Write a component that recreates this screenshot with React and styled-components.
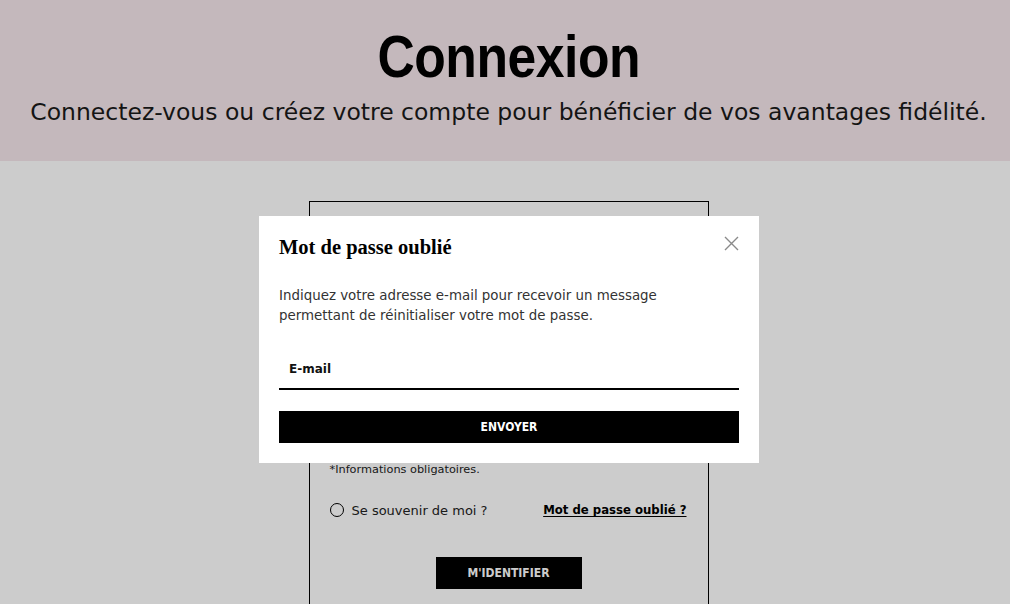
import React from "react";
import styled, { createGlobalStyle } from "styled-components";

const sans = `"DejaVu Sans", "Liberation Sans", sans-serif`;
const narrow = `"Liberation Sans Narrow", "DejaVu Sans Condensed", sans-serif`;

const GlobalStyle = createGlobalStyle`
  * { box-sizing: border-box; }
  html, body { margin: 0; padding: 0; background: #fff; }
  body { font-family: ${sans}; color: #000; overflow: hidden; }
`;

function App() {
  return (
    <>
      <GlobalStyle />
      <Page>
        <Hero>
          <Title>Connexion</Title>
          <Subtitle>
            Connectez-vous ou créez votre compte pour bénéficier de vos avantages fidélité.
          </Subtitle>
        </Hero>
        <Main>
          <Card>
            <FieldInput type="email" aria-label="E-mail" />
            <FieldInput type="password" aria-label="Mot de passe" />
            <Note>*Informations obligatoires.</Note>
            <OptionsRow>
              <Remember>
                <Radio />
                Se souvenir de moi ?
              </Remember>
              <ForgotLink href="#">Mot de passe oublié ?</ForgotLink>
            </OptionsRow>
            <LoginButton>M'IDENTIFIER</LoginButton>
          </Card>
        </Main>
      </Page>
      <Overlay />
      <Modal>
        <CloseButton aria-label="Fermer">
          <svg width="15" height="15" viewBox="0 0 15 15">
            <path d="M1 1L14 14M14 1L1 14" stroke="#8a8a8a" strokeWidth="1.4" fill="none" />
          </svg>
        </CloseButton>
        <ModalTitle>Mot de passe oublié</ModalTitle>
        <ModalText>
          Indiquez votre adresse e-mail pour recevoir un message
          <br />
          permettant de réinitialiser votre mot de passe.
        </ModalText>
        <EmailInput placeholder="E-mail" />
        <SendButton>ENVOYER</SendButton>
      </Modal>
    </>
  );
}
export default App;

const Page = styled.div`
  width: 1010px;
  height: 604px;
  overflow: hidden;
`;
const Hero = styled.header`
  height: 161px;
  background: #f6e7eb;
  display: flex;
  flex-direction: column;
  align-items: center;
  padding: 25px 0 0 7px;
`;
const Title = styled.h1`
  margin: 0;
  font-family: "Liberation Sans", sans-serif;
  font-weight: 700;
  font-size: 60px;
  line-height: 64px;
  letter-spacing: -0.5px;
  transform: scaleX(0.86);
`;
const Subtitle = styled.p`
  margin: 9px 0 0;
  font-size: 23.5px;
  line-height: 28px;
  color: #1a1a1a;
`;
const Main = styled.main`
  padding: 40px 0 0 7px;
`;
const Card = styled.section`
  width: 400px;
  margin: 0 auto;
  border: 1px solid #000;
  border-bottom: none;
  padding: 30px 20px 20px;
  display: flex;
  flex-direction: column;
`;
const FieldInput = styled.input`
  height: 60px;
  margin: 28px 0 30px;
  border: none;
  border-bottom: 2px solid #000;
  background: transparent;
  &:first-child { margin-top: 30px; }
  &:nth-of-type(2) { margin-bottom: 22px; }
`;
const Note = styled.p`
  margin: 0;
  font-size: 11.3px;
  line-height: 16px;
  color: #222;
`;
const OptionsRow = styled.div`
  margin-top: 22px;
  height: 20px;
  display: flex;
  align-items: center;
  justify-content: space-between;
  padding-right: 1px;
`;
const Remember = styled.label`
  display: flex;
  align-items: center;
  gap: 8px;
  font-size: 13px;
  color: #222;
`;
const Radio = styled.span`
  width: 14px;
  height: 14px;
  border: 1.5px solid #000;
  border-radius: 50%;
`;
const ForgotLink = styled.a`
  color: #000;
  font-size: 11.7px;
  font-weight: 700;
  text-decoration: underline;
  text-underline-offset: 2px;
`;
const LoginButton = styled.button`
  align-self: center;
  margin-top: 37px;
  width: 146px;
  height: 32px;
  border: none;
  background: #000;
  color: #fff;
  font-family: ${narrow};
  font-weight: 700;
  font-size: 12px;
`;
const Overlay = styled.div`
  position: fixed;
  inset: 0;
  background: rgba(0, 0, 0, 0.2);
`;
const Modal = styled.div`
  position: fixed;
  left: 259px;
  top: 216px;
  width: 500px;
  background: #fff;
  padding: 19px 20px 20px;
  display: flex;
  flex-direction: column;
`;
const CloseButton = styled.button`
  position: absolute;
  top: 20px;
  right: 20px;
  padding: 0;
  border: none;
  background: none;
  display: flex;
`;
const ModalTitle = styled.h3`
  margin: 0;
  font-family: "Liberation Serif", serif;
  font-weight: 700;
  font-size: 20.5px;
  line-height: 24px;
`;
const ModalText = styled.p`
  margin: 27px 0 0;
  font-size: 13.4px;
  line-height: 20px;
  color: #333;
`;
const EmailInput = styled.input`
  margin-top: 24px;
  height: 40px;
  border: none;
  border-bottom: 2px solid #000;
  padding: 0 10px;
  font-family: ${sans};
  font-size: 12px;
  font-weight: 700;
  outline: none;
  &::placeholder { color: #111; }
`;
const SendButton = styled.button`
  margin-top: 21px;
  height: 32px;
  border: none;
  background: #000;
  color: #fff;
  font-family: ${narrow};
  font-weight: 700;
  font-size: 12px;
`;
